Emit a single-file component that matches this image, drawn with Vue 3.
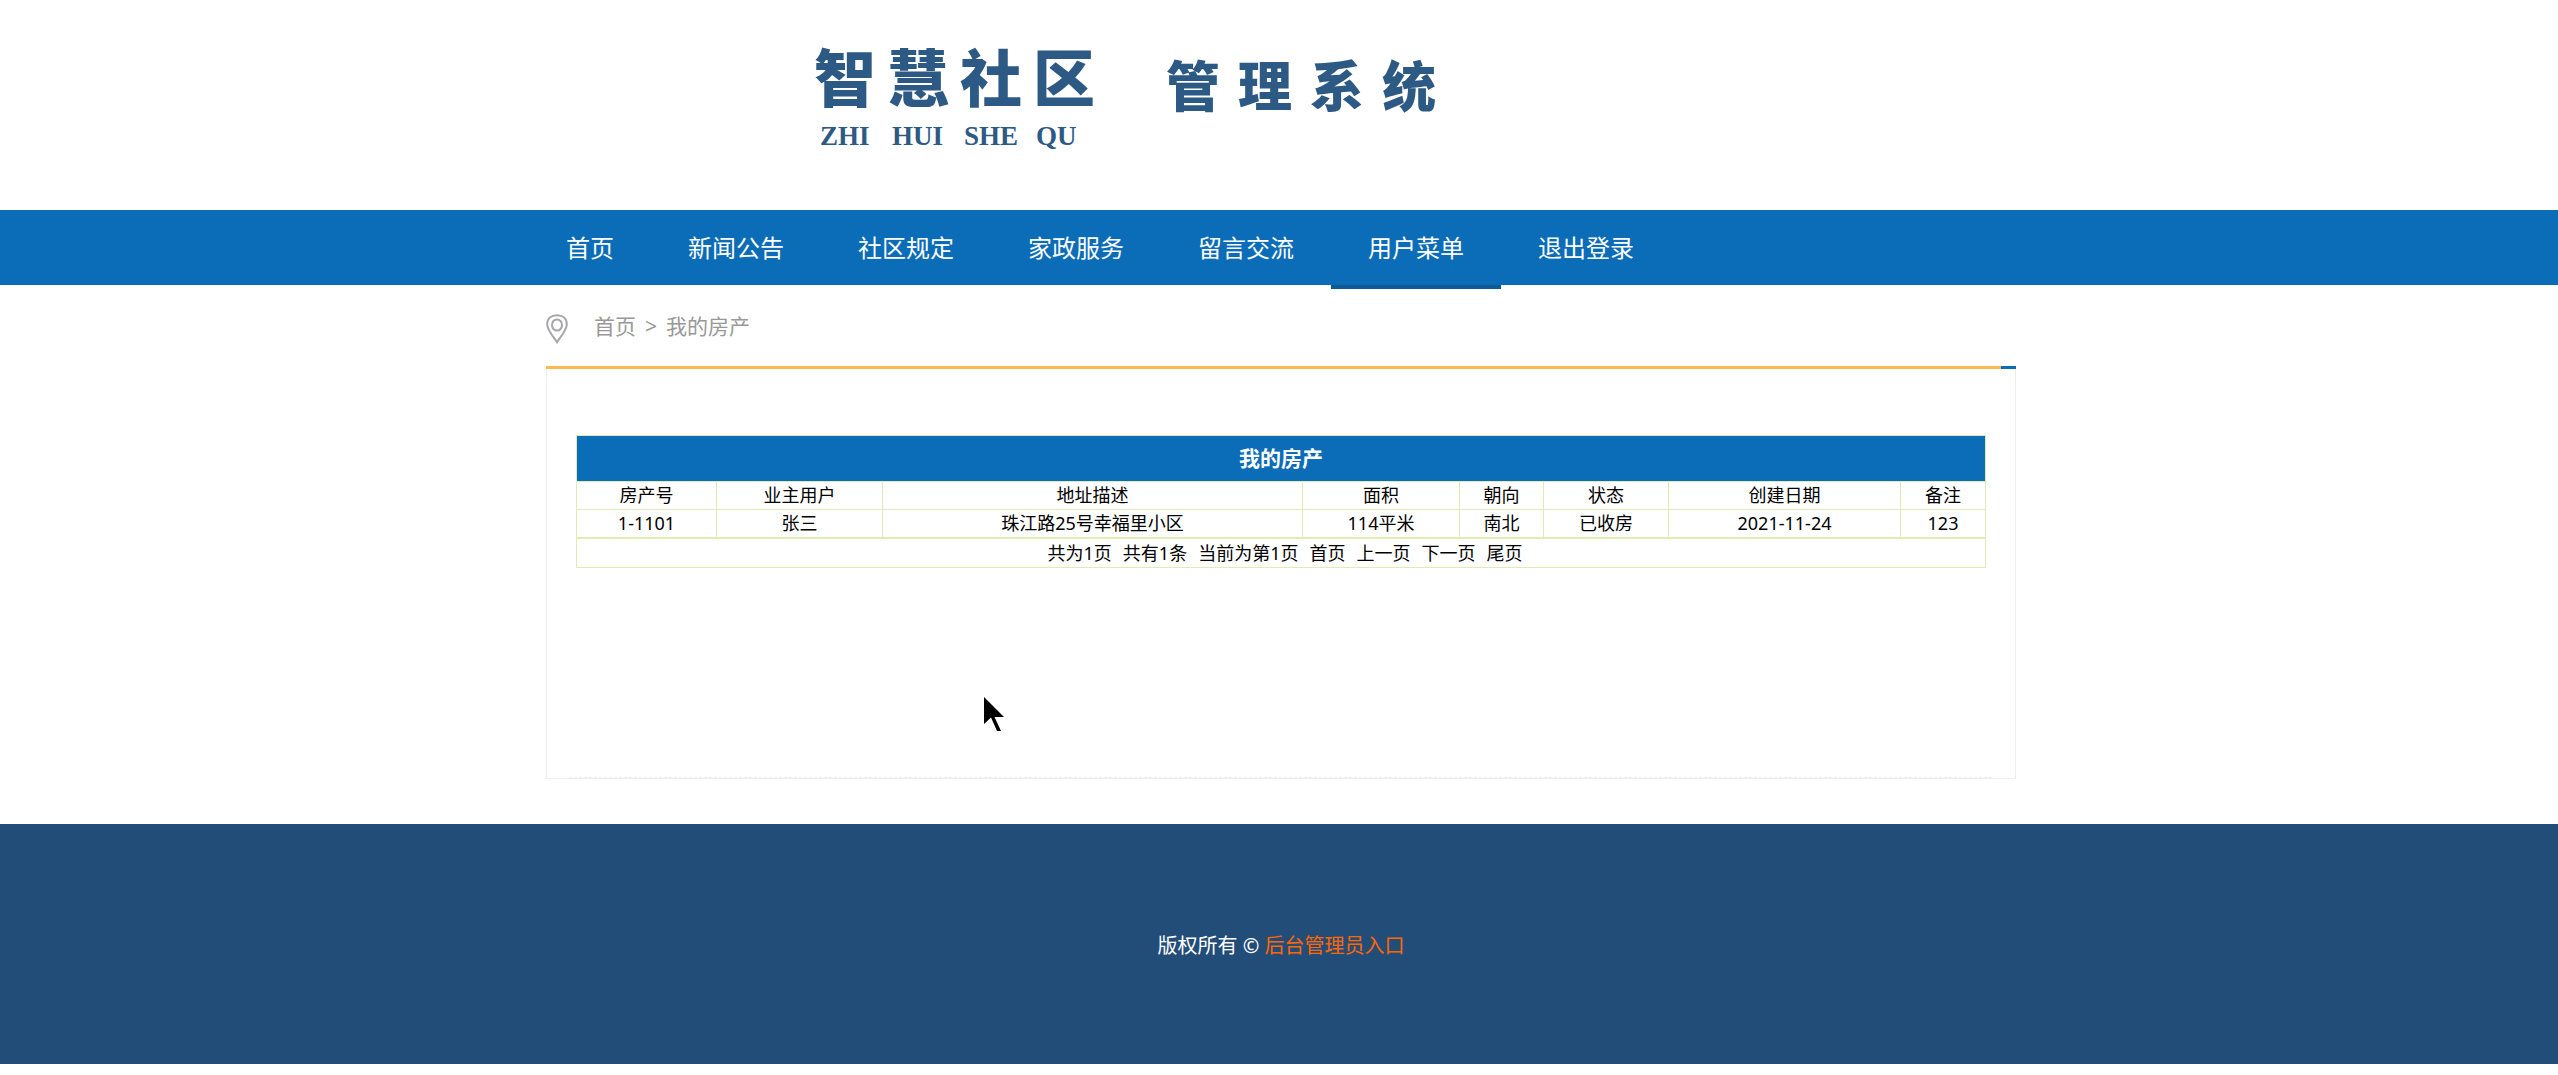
<script setup>
const brand = [...'智慧社区']
const pinyin = ['ZHI', 'HUI', 'SHE', 'QU']
const system = [...'管理系统']
const menu = ['首页', '新闻公告', '社区规定', '家政服务', '留言交流', '用户菜单', '退出登录']
const activeItem = '用户菜单'

const columns = ['房产号', '业主用户', '地址描述', '面积', '朝向', '状态', '创建日期', '备注']
const weights = [140, 166, 420, 157, 84, 125, 232, 85]
const total = weights.reduce((a, b) => a + b, 0)
const rows = [['1-1101', '张三', '珠江路25号幸福里小区', '114平米', '南北', '已收房', '2021-11-24', '123']]

const counts = ['共为1页', '共有1条', '当前为第1页']
const pages = ['首页', '上一页', '下一页', '尾页']
</script>

<template>
  <div class="page">
    <header class="header">
      <div class="logo">
        <div class="brand">
          <div class="brand-name"><span v-for="c in brand" :key="c">{{ c }}</span></div>
          <div class="brand-pinyin"><span v-for="p in pinyin" :key="p">{{ p }}</span></div>
        </div>
        <div class="system"><span v-for="c in system" :key="c">{{ c }}</span></div>
      </div>
    </header>

    <nav class="nav">
      <ul class="menu">
        <li v-for="m in menu" :key="m" :class="{ active: m === activeItem }"><a href="#">{{ m }}</a></li>
      </ul>
    </nav>

    <main class="wrap">
      <div class="crumbs">
        <svg class="pin" viewBox="0 0 22 30" fill="none" stroke="#a6a6ab" stroke-width="2">
          <path d="M11 28.200C8.400 24 1.200 16.400 1.200 10.200C1.200 4.400 5.200 1.200 11 1.200s9.800 3.200 9.800 9c0 6.200-7.200 13.800-9.800 18z" />
          <ellipse cx="11" cy="11" rx="5" ry="5.600" />
        </svg>
        <a href="#">首页</a><span class="sep">&gt;</span><a href="#">我的房产</a>
      </div>

      <div class="bar"><span></span></div>
      <section class="panel">
        <table class="grid">
          <colgroup>
            <col v-for="(w, i) in weights" :key="i" :style="{ width: (w / total) * 100 + '%' }" />
          </colgroup>
          <thead>
            <tr><th class="title" colspan="8">我的房产</th></tr>
            <tr><th v-for="c in columns" :key="c">{{ c }}</th></tr>
          </thead>
          <tbody>
            <tr v-for="r in rows" :key="r[0]"><td v-for="(v, i) in r" :key="i">{{ v }}</td></tr>
          </tbody>
        </table>
        <div class="pager">
          <span v-for="c in counts" :key="c">{{ c }}</span>
          <a v-for="p in pages" :key="p" href="#">{{ p }}</a>
        </div>
        <div class="dashes"></div>
      </section>
    </main>

    <footer class="footer">
      <p>版权所有 © <a href="#">后台管理员入口</a></p>
    </footer>

    <svg class="cursor" viewBox="0 0 20 34"><path d="M0 0V27L7 20.500L13 34H17L10.500 20H20z" /></svg>
  </div>
</template>

<style>
body {
  margin: 0;
  background: #fff;
}
</style>

<style scoped>
.page {
  position: relative;
  font-family: "Noto Sans", "Noto Sans CJK SC", sans-serif;
  color: #000;
}
a {
  color: inherit;
  text-decoration: none;
}
.header,
.menu,
.wrap {
  width: 1470px;
  max-width: 100%;
  margin: 0 auto;
  position: relative;
  left: 2px;
}
.header {
  height: 210px;
}
.logo {
  display: flex;
  padding: 30px 0 0 268px;
  color: #2d5a84;
  font-family: "Noto Sans CJK SC", sans-serif;
}
.brand {
  width: 284px;
}
.brand-name {
  display: flex;
  gap: 11px;
  font-size: 62px;
  font-weight: 900;
  line-height: 90px;
}
.brand-pinyin {
  display: grid;
  grid-template-columns: repeat(4, 72px);
  padding-left: 6px;
  font-family: "Liberation Serif", serif;
  font-size: 27px;
  font-weight: 700;
  line-height: 32px;
}
.system {
  display: flex;
  gap: 18px;
  padding: 14px 0 0 68px;
  font-size: 54px;
  font-weight: 900;
  line-height: 80px;
}
.nav {
  background: #0b6cb8;
}
.menu {
  display: flex;
  box-sizing: border-box;
  padding: 0;
  list-style: none;
}
.menu li:first-child {
  margin-left: -17px;
}
.menu li {
  height: 75px;
}
.menu a {
  display: block;
  padding: 0 37px;
  color: #fff;
  font-size: 24px;
  line-height: 76px;
  height: 75px;
}
.menu .active a {
  border-bottom: 4px solid #0d5a99;
}
.crumbs {
  display: flex;
  align-items: center;
  height: 81px;
  color: #999;
  font-size: 21px;
  line-height: 32px;
}
.pin {
  width: 22px;
  height: 30px;
  margin: 6px 26px 0 0;
}
.sep {
  margin: 0 9px;
}
.bar {
  display: flex;
  justify-content: flex-end;
  height: 3px;
  background: #ffb74f;
}
.bar span {
  width: 15px;
  background: #0b6cb8;
}
.panel {
  display: flex;
  flex-direction: column;
  box-sizing: border-box;
  min-height: 410px;
  margin-bottom: 45px;
  padding: 66px 22px 0;
  border: 1px solid #eee;
  border-top: 0;
}
.grid,
.pager {
  margin: 0 7px;
}
.grid {
  width: calc(100% - 14px);
  table-layout: fixed;
  border-collapse: collapse;
  font-size: 18px;
  line-height: 27px;
  text-align: center;
}
.grid th,
.grid td {
  height: 27px;
  padding: 0;
  border: 1px solid #e1ebb6;
  font-weight: 400;
}
.grid .title {
  height: 45px;
  background: #0b6cb8;
  color: #fff;
  font-size: 21px;
  font-weight: 700;
}
.pager {
  display: flex;
  justify-content: center;
  gap: 11px;
  padding-left: 8px;
  border: 1px solid #e1ebb6;
  font-size: 18px;
  line-height: 28px;
}
.dashes {
  height: 1px;
  margin-top: auto;
  background: repeating-linear-gradient(90deg, #eee 0 3px, transparent 3px 5px);
}
.footer {
  display: flex;
  align-items: center;
  justify-content: center;
  height: 240px;
  padding-left: 4px;
  background: #234d79;
  color: #fff;
  font-size: 20px;
}
.footer p {
  margin: 0;
}
.footer a {
  color: #f60;
}
.cursor {
  position: absolute;
  left: 984px;
  top: 697px;
  width: 20px;
  height: 34px;
}
</style>
